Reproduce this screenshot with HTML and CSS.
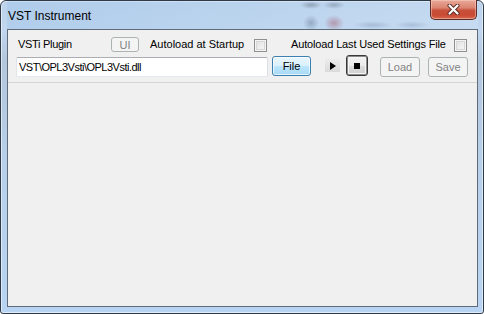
FILE: index.html
```html
<!DOCTYPE html>
<html>
<head>
<meta charset="utf-8">
<link rel="stylesheet" href="styles.css">
</head>
<body>
<div class="window">
  <div class="titlebar">
    <span class="title">VST Instrument</span>
    <div class="close">
      <svg width="13" height="11" viewBox="0 0 13 11">
        <path d="M2.5 1.5 L10.5 9.5 M10.5 1.5 L2.5 9.5" stroke="#5a2a26" stroke-width="4" stroke-linecap="round" fill="none"/>
        <path d="M2.5 1.5 L10.5 9.5 M10.5 1.5 L2.5 9.5" stroke="#ffffff" stroke-width="2.2" stroke-linecap="round" fill="none"/>
      </svg>
    </div>
  </div>
  <div class="client">
    <div class="row row1">
      <span class="label l1">VSTi Plugin</span>
      <div class="btn disabled ui">UI</div>
      <span class="label l2">Autoload at Startup</span>
      <span class="check"></span>
      <span class="label l3">Autoload Last Used Settings File</span>
      <span class="check"></span>
    </div>
    <div class="row row2">
      <div class="input">VST\OPL3Vsti\OPL3Vsti.dll</div>
      <div class="btn file">File</div>
      <div class="play">
        <svg width="6" height="8" viewBox="0 0 6 8"><path d="M0 0 L6 4 L0 8 Z" fill="#000"/></svg>
      </div>
      <div class="stop"><span class="square"></span></div>
      <div class="btn disabled load">Load</div>
      <div class="btn disabled save">Save</div>
    </div>
    <div class="sep"></div>
  </div>
</div>
</body>
</html>
```

FILE: styles.css
```css
html, body {
  margin: 0;
  padding: 0;
  background: #ffffff;
}

.window {
  box-sizing: border-box;
  width: 484px;
  height: 314px;
  border: 1px solid #2f3a48;
  border-radius: 6px 6px 3px 3px;
  background: linear-gradient(to bottom, #bcd3ec 0px, #c1d7ef 28px, #b3c7dc 60px, #b7cfe9 160px, #b8d4f2 100%);
  box-shadow: inset 0 0 0 1px rgba(255, 255, 255, 0.55);
  padding: 0 5px 6px 6px;
  display: flex;
  flex-direction: column;
  font-family: "Liberation Sans", Arial, sans-serif;
}

.titlebar {
  height: 28px;
  display: flex;
  align-items: flex-start;
  flex-shrink: 0;
  background:
    radial-gradient(ellipse 11px 4px at 304px 4px, rgba(60, 70, 85, 0.35), rgba(60, 70, 85, 0) 100%),
    radial-gradient(ellipse 11px 4px at 327px 4px, rgba(60, 70, 85, 0.3), rgba(60, 70, 85, 0) 100%),
    radial-gradient(ellipse 8px 8px at 304px 22px, rgba(70, 90, 120, 0.35), rgba(70, 90, 120, 0) 100%),
    radial-gradient(ellipse 10px 8px at 327px 22px, rgba(160, 60, 80, 0.4), rgba(160, 60, 80, 0) 100%),
    radial-gradient(ellipse 20px 4px at 366px 24px, rgba(70, 90, 120, 0.22), rgba(70, 90, 120, 0) 100%),
    radial-gradient(ellipse 18px 4px at 405px 24px, rgba(70, 90, 120, 0.2), rgba(70, 90, 120, 0) 100%),
    linear-gradient(to right, rgba(150, 190, 230, 0.35), rgba(210, 228, 246, 0.35));
}

.title {
  margin-top: 8px;
  margin-left: 1px;
  font-size: 12px;
  line-height: 15px;
  color: #000000;
}

.close {
  margin-left: auto;
  margin-right: 1px;
  margin-top: -1px;
  box-sizing: border-box;
  width: 47px;
  height: 20px;
  border: 1px solid #5b2c25;
  border-top: none;
  border-radius: 0 0 5px 5px;
  background: linear-gradient(to bottom, #e9a899 0%, #dc8672 40%, #c7503b 55%, #c94a33 80%, #d8694f 100%);
  box-shadow: inset 0 0 0 1px rgba(255, 220, 210, 0.45);
  display: flex;
  align-items: center;
  justify-content: center;
}

.client {
  flex: 1;
  border: 1px solid #5f6b78;
  background: #f0f0f0;
  display: flex;
  flex-direction: column;
  font-size: 11px;
  color: #000000;
}

.row {
  display: flex;
  align-items: center;
}

.row1 {
  margin-top: 7px;
  height: 15px;
  padding-left: 10px;
}

.label {
  white-space: nowrap;
  line-height: 15px;
}

.l1 { width: 93px; letter-spacing: -0.3px; }
.l2 { width: 104px; margin-left: 11px; }
.l3 { width: 163px; margin-left: 24px; letter-spacing: -0.15px; }

.check {
  box-sizing: border-box;
  width: 13px;
  height: 13px;
  border: 1px solid #8e8f8f;
  background: linear-gradient(to bottom right, #dcdcdc, #fbfbfb);
  box-shadow: inset 0 0 0 1px #f4f4f4, inset 0 0 0 2px #d6d6d6;
  margin-top: 1px;
}

.btn {
  box-sizing: border-box;
  display: flex;
  align-items: center;
  justify-content: center;
  border-radius: 3px;
  font-size: 11px;
}

.btn.disabled {
  border: 1px solid #adb2b5;
  background: #f4f4f4;
  color: #838383;
}

.ui {
  width: 28px;
  height: 15px;
}

.row2 {
  margin-top: 3px;
  height: 21px;
  align-items: flex-start;
  padding-left: 8px;
}

.input {
  box-sizing: border-box;
  width: 252px;
  height: 20px;
  margin-top: 2px;
  border: 1px solid #abadb3;
  border-left-color: #e2e3ea;
  border-right-color: #dbdfe6;
  border-bottom-color: #e3e9ef;
  border-radius: 2px;
  background: #ffffff;
  padding-left: 2px;
  line-height: 18px;
  white-space: nowrap;
  letter-spacing: -0.5px;
}

.file {
  width: 39px;
  height: 20px;
  margin-left: 4px;
  margin-top: 1px;
  border: 1px solid #3c7fb1;
  background: linear-gradient(to bottom, #eaf6fd 0%, #d9f0fc 50%, #bee6fd 51%, #a7d9f5 100%);
  box-shadow: inset 0 0 0 1px rgba(255, 255, 255, 0.7);
  color: #000000;
}

.play {
  box-sizing: border-box;
  width: 15px;
  height: 13px;
  margin-left: 14px;
  margin-top: 4px;
  background: linear-gradient(to bottom, #ececec, #dadada);
  display: flex;
  align-items: center;
  justify-content: center;
}

.stop {
  box-sizing: border-box;
  width: 22px;
  height: 21px;
  margin-left: 6px;
  border: 1px solid #3a3a3a;
  border-radius: 3px;
  background: linear-gradient(to bottom, #f2f2f2 0%, #ebebeb 50%, #dddddd 51%, #cfcfcf 100%);
  box-shadow: inset 0 0 0 1px #8a8a8a, inset 0 0 0 2px #f6f6f6;
  display: flex;
  align-items: center;
  justify-content: center;
}

.square {
  width: 6px;
  height: 6px;
  background: #000000;
}

.load {
  width: 40px;
  height: 20px;
  margin-left: 12px;
  margin-top: 2px;
}

.save {
  width: 40px;
  height: 20px;
  margin-left: 8px;
  margin-top: 2px;
}

.sep {
  margin-top: 6px;
  height: 1px;
  background: #d5d5d5;
}
```
